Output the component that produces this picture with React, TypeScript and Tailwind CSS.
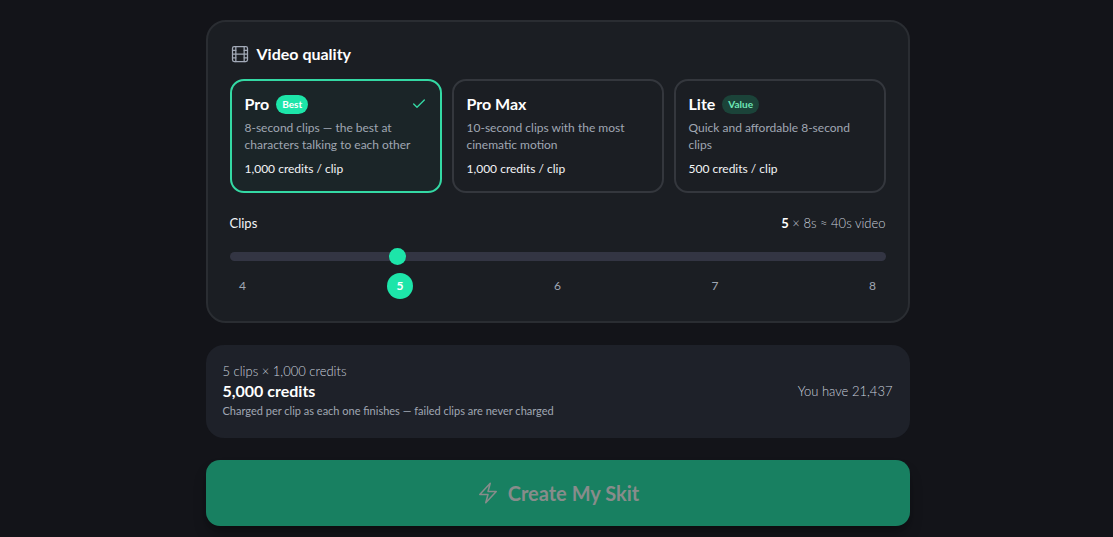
import { useState } from "react";
import { Check, Film } from "lucide-react";

type Quality = {
  id: string;
  name: string;
  badge?: string;
  badgeClass?: string;
  description: string;
  credits: number;
  seconds: number;
};

const qualities: Quality[] = [
  {
    id: "pro",
    name: "Pro",
    badge: "Best",
    badgeClass: "bg-[#1de5a9] text-white",
    description: "8-second clips — the best at characters talking to each other",
    credits: 1000,
    seconds: 8,
  },
  {
    id: "pro-max",
    name: "Pro Max",
    description: "10-second clips with the most cinematic motion",
    credits: 1000,
    seconds: 10,
  },
  {
    id: "lite",
    name: "Lite",
    badge: "Value",
    badgeClass: "bg-[#1b4339] text-[#6ee7b7]",
    description: "Quick and affordable 8-second clips",
    credits: 500,
    seconds: 8,
  },
];

const clipCounts = [4, 5, 6, 7, 8];
const balance = 21437;

const format = (n: number) => n.toLocaleString("en-US");

function BoltIcon() {
  return (
    <svg
      viewBox="0 0 24 24"
      fill="none"
      stroke="currentColor"
      strokeWidth="1.5"
      strokeLinecap="round"
      strokeLinejoin="round"
      className="size-6"
      aria-hidden="true"
    >
      <path d="m3.75 13.5 10.5-11.25L12 10.5h8.25L9.75 21.75 12 13.5H3.75Z" />
    </svg>
  );
}

export default function App() {
  const [selected, setSelected] = useState("pro");
  const [clips, setClips] = useState(5);

  const quality = qualities.find((q) => q.id === selected) ?? qualities[0];

  return (
    <div className="min-h-screen bg-[#131419] pt-5 pr-4 pb-[11px] pl-[18px] font-['Lato',sans-serif] text-white">
      <main className="mx-auto flex max-w-[704px] flex-col gap-[22px]">
        {/* Quality + clip count */}
        <section className="rounded-[20px] border-2 border-[#2a2d32] bg-[#1b1e23] px-[22px] pt-[21px] pb-[22px]">
          <h2 className="mb-[14px] flex items-center gap-[7px] text-base leading-[22px] font-bold">
            <Film className="size-5 text-[#a3aab8]" strokeWidth={1.5} />
            Video quality
          </h2>

          <div className="grid grid-cols-3 gap-[10px]">
            {qualities.map((q) => {
              const active = q.id === selected;
              return (
                <button
                  key={q.id}
                  type="button"
                  aria-pressed={active}
                  onClick={() => setSelected(q.id)}
                  className={`flex flex-col rounded-[14px] border-2 p-[13px] text-left ${
                    active ? "border-[#34d9a4] bg-[#1b2528]" : "border-[#34373d] bg-[#1b1e23]"
                  }`}
                >
                  <span className="flex w-full items-center gap-[7px]">
                    <span className="text-base leading-5 font-bold">{q.name}</span>
                    {q.badge && (
                      <span className={`rounded-full px-[6px] text-[10px] leading-[19px] font-bold ${q.badgeClass}`}>
                        {q.badge}
                      </span>
                    )}
                    {active && <Check className="ml-auto size-4 text-[#34d9a4]" strokeWidth={2} />}
                  </span>
                  <span className="mt-[5px] text-xs leading-[17px] text-[#a0a7b3]">{q.description}</span>
                  <span className="mt-[7px] text-xs leading-[18px] text-[#f3f4f6]">
                    {format(q.credits)} credits / clip
                  </span>
                </button>
              );
            })}
          </div>

          <div className="mt-5 flex items-center justify-between text-[13px] leading-5">
            <label htmlFor="clips" className="text-[#f3f4f6]">
              Clips
            </label>
            <span className="font-light text-[#c9d0dc]">
              <strong className="font-bold text-white">{clips}</strong> × {quality.seconds}s ≈ {clips * quality.seconds}s
              video
            </span>
          </div>

          <input
            id="clips"
            type="range"
            min={4}
            max={8}
            value={clips}
            onChange={(e) => setClips(Number(e.target.value))}
            className="mt-[19px] block h-[9px] w-full cursor-pointer appearance-none rounded-full bg-[#333543] [&::-webkit-slider-thumb]:size-[17px] [&::-webkit-slider-thumb]:appearance-none [&::-webkit-slider-thumb]:rounded-full [&::-webkit-slider-thumb]:bg-[#1de5a9]"
          />

          <div className="mt-3 flex justify-between">
            {clipCounts.map((n) => (
              <button
                key={n}
                type="button"
                onClick={() => setClips(n)}
                className={`size-[26px] rounded-full text-xs ${
                  n === clips ? "bg-[#1de5a9] font-bold text-white" : "text-[#a0a7b3]"
                }`}
              >
                {n}
              </button>
            ))}
          </div>
        </section>

        {/* Cost summary */}
        <section className="flex items-center justify-between rounded-[18px] bg-[#1e2129] px-[17px] pt-4 pb-[17px] text-[#c9d0dc]">
          <div>
            <p className="text-[13px] leading-5 font-light">
              {clips} clips × {format(quality.credits)} credits
            </p>
            <p className="text-base leading-5 font-bold text-white">{format(clips * quality.credits)} credits</p>
            <p className="text-[11px] leading-5 text-[#a0a7b3]">
              Charged per clip as each one finishes — failed clips are never charged
            </p>
          </div>
          <p className="text-[13px] leading-5 font-light">You have {format(balance)}</p>
        </section>

        <button
          type="button"
          disabled
          className="flex h-[66px] items-center justify-center gap-2 rounded-[14px] bg-[#188061] text-xl font-bold text-[#888c8b] shadow-lg shadow-black/30"
        >
          <BoltIcon />
          Create My Skit
        </button>
      </main>
    </div>
  );
}
